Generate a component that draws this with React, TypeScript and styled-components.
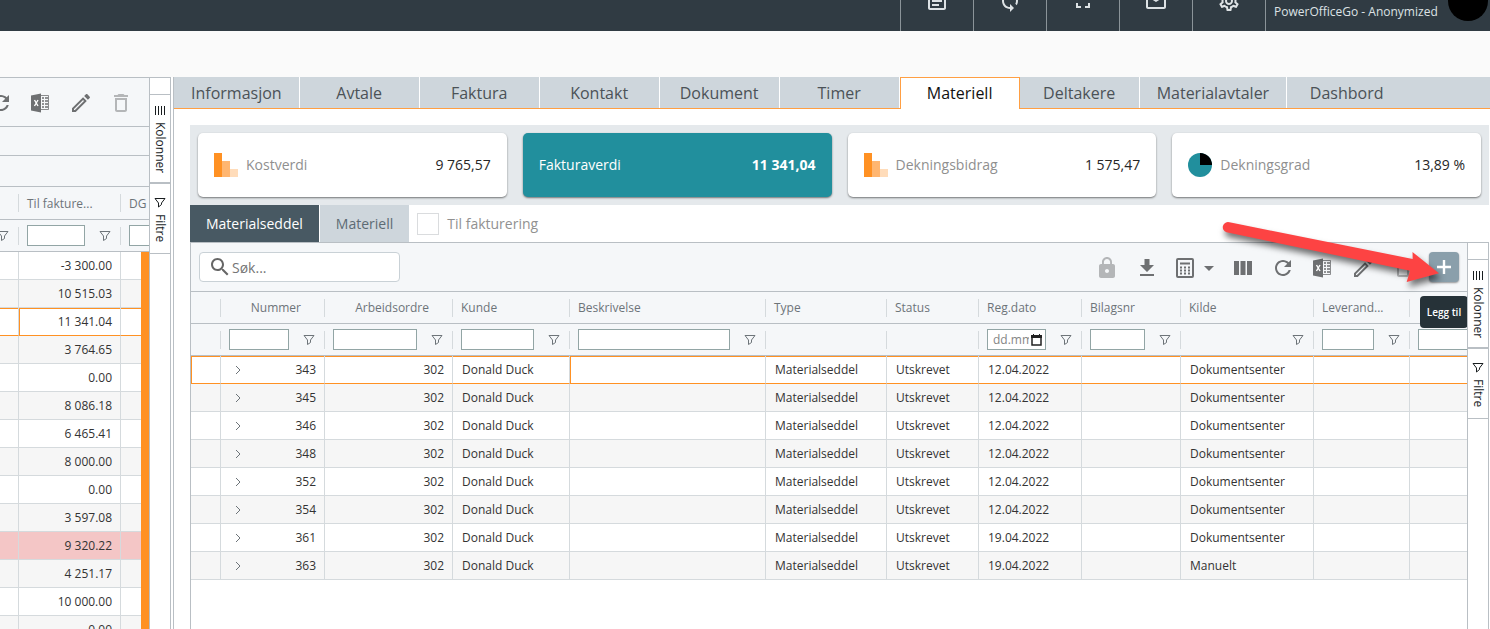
import React from "react";
import styled, { createGlobalStyle } from "styled-components";
import {
  MdFullscreen,
  MdOutlineArticle,
  MdOutlineEmail,
  MdOutlineSettings,
  MdSync,
} from "react-icons/md";

const line = "#b9bfc4";
const rowLine = "#d5dadd";
const orange = "#ff9123";
const tabGrey = "#ced6dc";
const panelGrey = "#f5f7f9";
const iconGrey = "#6e7072";

const GlobalStyle = createGlobalStyle`
  *, *::before, *::after { box-sizing: border-box; }
  body {
    margin: 0;
    background: #fafafa;
    color: #333333;
    font-family: "Open Sans", "Noto Sans", sans-serif;
    font-size: 12px;
    overflow: hidden;
  }
  button, input { font: inherit; color: inherit; }
  button { border: 0; padding: 0; background: none; cursor: pointer; }
`;

const Page = styled.div`
  display: flex;
  flex-direction: column;
  height: 100vh;
  overflow: hidden;
`;

/* ---------- top bar ---------- */

const TopBar = styled.header`
  display: flex;
  justify-content: flex-end;
  flex: none;
  height: 60px;
  margin-top: -29px;
  margin-bottom: 46px;
  background: #303b43;
  color: #dde2e5;
`;

const TopButton = styled.button`
  display: flex;
  align-items: center;
  justify-content: center;
  width: 73px;
  border-left: 1px solid #8b9499;
`;

const UserBox = styled.div`
  display: flex;
  align-items: center;
  justify-content: space-between;
  width: 225px;
  padding: 0 2px 0 8px;
  border-left: 1px solid #8b9499;
`;

const UserName = styled.span`
  padding-top: 22px;
  line-height: 18px;
  white-space: nowrap;
`;

const Avatar = styled.span`
  width: 40px;
  height: 40px;
  border-radius: 50%;
  background: #000000;
`;

/* ---------- frame ---------- */

const Columns = styled.div`
  display: flex;
  flex: 1;
  min-height: 0;
  background: #ffffff;
`;

const GridFrame = styled.section<{ $narrow?: boolean }>`
  display: flex;
  flex: ${(p) => (p.$narrow ? "none" : "1")};
  min-height: 0;
  border: 1px solid ${line};
  border-bottom: 0;
  border-left-width: ${(p) => (p.$narrow ? "0" : "1px")};
  background: #ffffff;
`;

const GridMain = styled.div<{ $narrow?: boolean }>`
  flex: ${(p) => (p.$narrow ? "none" : "1")};
  width: ${(p) => (p.$narrow ? "149px" : "auto")};
  min-width: 0;
  overflow: hidden;
`;

const RightPane = styled.main`
  display: flex;
  flex-direction: column;
  flex: 1;
  min-width: 0;
  margin-left: 2px;
  border-left: 1px solid ${line};
`;

const PaneBody = styled.div`
  display: flex;
  flex-direction: column;
  flex: 1;
  min-height: 0;
  padding: 16px 1px 0 16px;
`;

/* ---------- main tabs ---------- */

const TabBar = styled.nav`
  display: flex;
  flex: none;
  height: 32px;
  background: ${tabGrey};
  border-bottom: 1px solid #ff9f43;
`;

const Tab = styled.button<{ $active?: boolean; $last?: boolean }>`
  min-width: 120px;
  height: ${(p) => (p.$active ? "32px" : "31px")};
  padding: 0 17px ${(p) => (p.$active ? "2px" : "0")};
  font-size: 16px;
  line-height: 24px;
  color: ${(p) => (p.$active ? "#111111" : "#4b5257")};
  background: ${(p) => (p.$active ? "#ffffff" : tabGrey)};
  border: 0 solid #ff9f43;
  border-width: ${(p) => (p.$active ? "1px 1px 0" : "0 1px 0 0")};
  border-right-color: ${(p) => (p.$active ? "#ff9f43" : p.$last ? tabGrey : "#ffffff")};
`;

/* ---------- key figure cards ---------- */

const Cards = styled.div`
  display: grid;
  grid-template-columns: repeat(4, 1fr);
  gap: 16px;
  flex: none;
  padding: 8px;
  background: #e5e9ec;
`;

const Card = styled.button<{ $active?: boolean }>`
  display: flex;
  align-items: center;
  gap: 8px;
  height: 64px;
  padding: 0 16px;
  border-radius: 5px;
  font-size: 14px;
  line-height: 20px;
  background: ${(p) => (p.$active ? "#218f9d" : "#ffffff")};
  color: ${(p) => (p.$active ? "#ffffff" : "#8f8f8f")};
  font-weight: ${(p) => (p.$active ? 500 : 400)};
  box-shadow: 0 1px 2px rgba(0, 0, 0, 0.5);
`;

const CardValue = styled.span<{ $active?: boolean }>`
  margin-left: auto;
  font-weight: ${(p) => (p.$active ? 700 : 500)};
  color: ${(p) => (p.$active ? "#ffffff" : "#262626")};
`;

/* ---------- sub tabs ---------- */

const SubBar = styled.div`
  display: flex;
  align-items: center;
  flex: none;
  height: 37px;
`;

const SubTab = styled.button<{ $active?: boolean }>`
  height: 37px;
  padding: 0 16px;
  font-size: 14px;
  font-weight: ${(p) => (p.$active ? 500 : 400)};
  color: ${(p) => (p.$active ? "#ffffff" : "#5d6b74")};
  background: ${(p) => (p.$active ? "#485963" : tabGrey)};
  border-right: ${(p) => (p.$active ? "1px solid #ffffff" : "0")};
`;

const CheckLabel = styled.label`
  display: flex;
  align-items: center;
  gap: 8px;
  margin-left: 8px;
  font-size: 14px;
  color: #919191;
`;

const CheckBox = styled.input`
  appearance: none;
  width: 22px;
  height: 22px;
  margin: 0;
  border: 1px solid #dadcde;
  background: #ffffff;
`;

/* ---------- toolbar ---------- */

const Toolbar = styled.div`
  display: flex;
  align-items: center;
  justify-content: flex-end;
  gap: 16px;
  height: 49px;
  padding: 0 8px;
  background: ${panelGrey};
  border-bottom: 1px solid ${line};
`;

const NarrowToolbar = styled(Toolbar)`
  padding: 0 16px;
`;

const SearchBox = styled.label`
  display: flex;
  align-items: center;
  width: 201px;
  height: 30px;
  margin-right: auto;
  padding: 0 8px;
  border: 1px solid #c9d1d6;
  border-radius: 4px;
  background: #ffffff;
  color: #666666;
`;

const SearchInput = styled.input`
  flex: 1;
  min-width: 0;
  padding: 0;
  border: 0;
  outline: 0;
  background: none;
  font-size: 14px;
  &::placeholder { color: #757575; opacity: 1; }
`;

const ToolButton = styled.button<{ $dim?: boolean; $wide?: boolean }>`
  display: flex;
  align-items: flex-end;
  flex: none;
  width: ${(p) => (p.$wide ? "40px" : "24px")};
  height: 26px;
  color: ${(p) => (p.$dim ? "#b4b6b8" : iconGrey)};
`;

const AddWrap = styled.div`
  position: relative;
  margin-left: -2px;
`;

const AddButton = styled.button`
  display: flex;
  align-items: center;
  justify-content: center;
  width: 30px;
  height: 30px;
  border-radius: 4px;
  background: #8a9fab;
  color: #ffffff;
  box-shadow: 0 1px 2px rgba(0, 0, 0, 0.4);
`;

const Tooltip = styled.span`
  position: absolute;
  z-index: 2;
  top: 44px;
  left: -9px;
  width: 48px;
  border-radius: 4px;
  background: #263238;
  color: #ffffff;
  font-size: 10px;
  font-weight: 600;
  line-height: 32px;
  text-align: center;
  white-space: nowrap;
`;

const Band = styled.div<{ $height: number }>`
  height: ${(p) => p.$height}px;
  background: ${panelGrey};
  border-bottom: 1px solid ${line};
`;

/* ---------- table ---------- */

const Table = styled.table`
  width: 100%;
  table-layout: fixed;
  border-collapse: separate;
  border-spacing: 0;
`;

const HeadCell = styled.th<{ $right?: boolean; $last?: boolean; $tall?: boolean }>`
  height: ${(p) => (p.$tall ? "33px" : "32px")};
  padding: 0 ${(p) => (p.$right ? "24px" : p.$last ? "0" : "8px")} 0 8px;
  overflow: hidden;
  text-align: ${(p) => (p.$right ? "right" : "left")};
  font-weight: 400;
  color: #6d7479;
  white-space: nowrap;
  border-bottom: 1px solid ${line};
  background: ${(p) =>
      p.$last ? "none" : `linear-gradient(${rowLine}, ${rowLine}) right center / 1px 18px no-repeat`},
    ${panelGrey};
`;

const FilterTh = styled(HeadCell)`
  padding: 0;
`;

const FilterRow = styled.div<{ $clip?: boolean }>`
  display: flex;
  align-items: center;
  justify-content: ${(p) => (p.$clip ? "flex-start" : "flex-end")};
  gap: 12px;
  padding: 0 8px;
`;

const FilterInput = styled.input<{ $clip?: boolean }>`
  flex: 1 0 ${(p) => (p.$clip ? "80px" : "0")};
  min-width: 0;
  height: 21px;
  padding: 0 4px;
  border: 1px solid #92a5a5;
  border-radius: 0;
  background: #ffffff;
`;

const DateBox = styled.label`
  display: flex;
  align-items: center;
  gap: 2px;
  flex: 1;
  min-width: 0;
  height: 21px;
  padding: 0 3px 0 5px;
  border: 1px solid #92a5a5;
  background: #ffffff;
  color: #222222;
`;

const DateInput = styled.input`
  flex: 1;
  min-width: 0;
  padding: 0;
  border: 0;
  background: none;
  &::placeholder { color: #858585; opacity: 1; }
`;

const SmallButton = styled.button`
  display: flex;
  align-items: center;
  justify-content: center;
  flex: none;
  width: 16px;
  height: 16px;
  color: #6d7479;
`;

type RowTone = "plain" | "selected" | "alert";

const Row = styled.tr<{ $tone?: RowTone }>`
  &:nth-child(even) { background: #f6f6f6; }
  &:nth-child(odd) { background: ${(p) => (p.$tone === "alert" ? "#f4c6c6" : "#ffffff")}; }
  & > td {
    border-bottom-color: ${(p) => (p.$tone === "selected" ? orange : rowLine)};
    box-shadow: ${(p) => (p.$tone === "selected" ? `inset 0 1px ${orange}` : "none")};
  }
`;

const Cell = styled.td<{ $right?: boolean; $focus?: boolean; $last?: boolean; $bar?: boolean }>`
  height: 28px;
  padding: 0 8px 0 9px;
  overflow: hidden;
  white-space: nowrap;
  text-align: ${(p) => (p.$right ? "right" : "left")};
  border-bottom: 1px solid ${rowLine};
  border-right: ${(p) =>
    p.$bar ? `8px solid ${orange}` : p.$last ? "0" : `1px solid ${rowLine}`};
  border-left: ${(p) => (p.$focus ? `1px solid ${orange}` : "0")};
`;

const FirstCell = styled(Cell)<{ $selected?: boolean }>`
  border-left: ${(p) => (p.$selected ? `1px solid ${orange}` : "0")};
`;

const BarCell = styled(Cell)`
  border-bottom: 0;
  padding: 0;
`;

const BarFill = styled.div<{ $selected?: boolean }>`
  height: 28px;
  border-bottom: 1px solid ${(p) => (p.$selected ? orange : rowLine)};
`;

const NumberCell = styled.div`
  display: flex;
  align-items: center;
  justify-content: space-between;
`;

/* ---------- side tabs ---------- */

const SideBar = styled.aside`
  flex: none;
  width: 21px;
  padding-top: 16px;
  border-left: 1px solid ${line};
  background: #ffffff;
`;

const SideButton = styled.button`
  display: flex;
  align-items: center;
  justify-content: center;
  gap: 4px;
  width: 20px;
  min-height: 71px;
  padding: 7px 0 9px;
  writing-mode: vertical-rl;
  line-height: 20px;
  color: #181d1f;
  border-bottom: 1px solid ${line};
  border-top: 1px solid ${line};
`;

/* ---------- icons ---------- */

const Glyph = ({ d, size = 24 }: { d: string; size?: number }) => (
  <svg width={size} height={size} viewBox="0 0 24 24" fill="currentColor" aria-hidden="true">
    <path d={d} />
  </svg>
);

const paths = {
  refresh:
    "M17.65 6.35C16.2 4.9 14.21 4 12 4c-4.42 0-7.99 3.58-7.99 8s3.57 8 7.99 8c3.73 0 6.84-2.55 7.73-6h-2.08c-.82 2.33-3.04 4-5.65 4-3.31 0-6-2.69-6-6s2.69-6 6-6c1.66 0 3.14.69 4.22 1.78L13 11h7V4l-2.35 2.35z",
  lock: "M18 8h-1V6c0-2.76-2.24-5-5-5S7 3.24 7 6v2H6c-1.1 0-2 .9-2 2v10c0 1.1.9 2 2 2h12c1.1 0 2-.9 2-2V10c0-1.1-.9-2-2-2zm-6 9c-1.1 0-2-.9-2-2s.9-2 2-2 2 .9 2 2-.9 2-2 2zm3.1-9H8.9V6c0-1.71 1.39-3.1 3.1-3.1 1.71 0 3.1 1.39 3.1 3.1v2z",
  download: "M9.500 3h5v6H19l-7 7-7-7h4.500zM5 18h14v2H5z",
  edit: "M14.06 9.02l.92.92L5.92 19H5v-.92l9.06-9.06M17.66 3c-.25 0-.51.1-.7.29l-1.83 1.83 3.75 3.75 1.83-1.83c.39-.39.39-1.02 0-1.41l-2.34-2.34c-.2-.2-.45-.29-.71-.29zm-3.6 3.19L3 17.25V21h3.75L17.81 9.94l-3.75-3.75z",
  trash:
    "M6 19c0 1.1.9 2 2 2h8c1.1 0 2-.9 2-2V7H6v12zM8 9h8v10H8V9zm7.5-5l-1-1h-5l-1 1H5v2h14V4z",
  search:
    "M15.5 14h-.79l-.28-.27C15.41 12.59 16 11.11 16 9.5 16 5.91 13.09 3 9.5 3S3 5.91 3 9.5 5.91 16 9.5 16c1.61 0 3.09-.59 4.23-1.57l.27.28v.79l5 4.99L20.49 19l-4.99-5zm-6 0C7.01 14 5 11.99 5 9.5S7.01 5 9.5 5 14 7.01 14 9.5 11.99 14 9.5 14z",
  columns: "M3 5h5v14H3zM9.500 5h5v14h-5zM16 5h5v14h-5z",
  plus: "M10.800 5h2.400v5.800H19v2.400h-5.800V19h-2.400v-5.800H5v-2.400h5.800z",
};

const ExcelIcon = () => (
  <svg width="24" height="24" viewBox="0 0 24 24" aria-hidden="true">
    <path d="M2 4.500L12 2.500v19L2 19.500z" fill="currentColor" />
    <path d="M12 4.500h7.500v14H12" fill="none" stroke="currentColor" strokeWidth="0.800" />
    <path
      d="M13 7h2M16 7h3M13 10h2M16 10h3M13 13h2M16 13h3M13 16h2M16 16h3"
      stroke="currentColor"
      strokeWidth="1.500"
    />
    <path d="M5.500 9l3.500 6M9 9l-3.500 6" stroke="#ffffff" strokeWidth="1.400" />
  </svg>
);

const CalcIcon = () => (
  <svg width="40" height="24" viewBox="0 0 40 24" fill="none" aria-hidden="true">
    <rect x="2" y="3" width="16" height="18" rx="1" stroke="currentColor" strokeWidth="2" />
    <path d="M5 7.500h10" stroke="currentColor" strokeWidth="2" />
    <path
      d="M5 11.500h10M5 14.500h10M5 17.500h10"
      stroke="currentColor"
      strokeWidth="2"
      strokeDasharray="2 2"
    />
    <path d="M29 10h10l-5 5z" fill="currentColor" />
  </svg>
);

const FunnelIcon = () => (
  <svg width="12" height="12" viewBox="0 0 12 12" fill="none" stroke="currentColor" aria-hidden="true">
    <path d="M1 1.500h10L7.500 6v2.500l-3 2V6z" />
  </svg>
);

const ColumnLines = () => (
  <svg width="16" height="16" viewBox="0 0 16 16" stroke="currentColor" aria-hidden="true">
    <path d="M3.500 4v9M6.500 4v9M9.500 4v9M12.500 4v9" />
  </svg>
);

const SideFunnel = () => (
  <svg width="16" height="16" viewBox="0 0 16 16" fill="none" stroke="currentColor" aria-hidden="true">
    <path d="M3 4.500h10L9.500 9v1.500l-3 2.500V9z" />
  </svg>
);

const ChevronIcon = () => (
  <svg width="12" height="12" viewBox="0 0 12 12" fill="none" stroke="currentColor" aria-hidden="true">
    <path d="M4 2l4 4-4 4" />
  </svg>
);

const CalendarIcon = () => (
  <svg width="11" height="12" viewBox="0 0 11 12" aria-hidden="true">
    <path d="M1 2h9v9H1z" fill="none" stroke="currentColor" strokeWidth="1.500" />
    <path d="M0 1h11v3H0zM2 0h1v2H2zM8 0h1v2H8z" fill="currentColor" />
  </svg>
);

const BarsIcon = () => (
  <svg width="24" height="24" viewBox="0 0 24 24" aria-hidden="true">
    <path d="M0 0h8v24H0z" fill="#ff9123" />
    <path d="M8 8h8v16H8z" fill="#ffb671" />
    <path d="M16 16h8v8h-8z" fill="#ffdcba" />
  </svg>
);

const PieIcon = () => (
  <svg width="24" height="24" viewBox="0 0 24 24" aria-hidden="true">
    <circle cx="12" cy="12" r="12" fill="#218f9d" />
    <path d="M12 12V0a12 12 0 0 1 12 12z" fill="#000000" />
  </svg>
);

/* ---------- parts ---------- */

const SideTabs = () => (
  <SideBar>
    <SideButton>
      <ColumnLines />
      Kolonner
    </SideButton>
    <SideButton>
      <SideFunnel />
      Filtre
    </SideButton>
  </SideBar>
);

type FilterKind = "text" | "date" | "icon" | "clip" | "none";

const Filter = ({ kind, label }: { kind: FilterKind; label: string }) => {
  if (kind === "none") return null;
  return (
    <FilterRow $clip={kind === "clip"}>
      {(kind === "text" || kind === "clip") && (
        <FilterInput $clip={kind === "clip"} aria-label={`Filter ${label}`} />
      )}
      {kind === "date" && (
        <DateBox>
          <DateInput placeholder="dd.mm.åååå" aria-label={`Filter ${label}`} />
          <CalendarIcon />
        </DateBox>
      )}
      {kind !== "clip" && (
        <SmallButton aria-label={`Filter ${label}`}>
          <FunnelIcon />
        </SmallButton>
      )}
    </FilterRow>
  );
};

const amounts = [
  "-3 300.00",
  "10 515.03",
  "11 341.04",
  "3 764.65",
  "0.00",
  "8 086.18",
  "6 465.41",
  "8 000.00",
  "0.00",
  "3 597.08",
  "9 320.22",
  "4 251.17",
  "10 000.00",
  "0.00",
];

const OrderList = () => (
  <GridFrame $narrow>
    <GridMain $narrow>
      <NarrowToolbar>
        <ToolButton aria-label="Oppdater"><Glyph d={paths.refresh} /></ToolButton>
        <ToolButton aria-label="Excel"><ExcelIcon /></ToolButton>
        <ToolButton aria-label="Rediger"><Glyph d={paths.edit} /></ToolButton>
        <ToolButton $dim aria-label="Slett"><Glyph d={paths.trash} /></ToolButton>
      </NarrowToolbar>
      <Band $height={29} />
      <Band $height={31} />
      <Table>
        <colgroup>
          <col width="19" />
          <col width="102" />
          <col />
        </colgroup>
        <thead>
          <tr>
            <HeadCell $tall />
            <HeadCell $tall>Til fakture...</HeadCell>
            <HeadCell $tall $last>DG</HeadCell>
          </tr>
          <tr>
            <FilterTh><Filter kind="icon" label="ordre" /></FilterTh>
            <FilterTh><Filter kind="text" label="til fakturering" /></FilterTh>
            <FilterTh $last><Filter kind="clip" label="DG" /></FilterTh>
          </tr>
        </thead>
        <tbody>
          {amounts.map((amount, i) => (
            <Row key={i} $tone={i === 2 ? "selected" : i === 10 ? "alert" : "plain"}>
              <Cell />
              <Cell $right $focus={i === 2}>{amount}</Cell>
              <BarCell $bar><BarFill $selected={i === 2} /></BarCell>
            </Row>
          ))}
        </tbody>
      </Table>
    </GridMain>
    <SideTabs />
  </GridFrame>
);

const columns: { title: string; width?: number; right?: boolean; filter: FilterKind }[] = [
  { title: "", width: 30, filter: "none" },
  { title: "Nummer", width: 104, right: true, filter: "text" },
  { title: "Arbeidsordre", width: 128, right: true, filter: "text" },
  { title: "Kunde", width: 117, filter: "text" },
  { title: "Beskrivelse", width: 196, filter: "text" },
  { title: "Type", width: 121, filter: "none" },
  { title: "Status", width: 92, filter: "none" },
  { title: "Reg.dato", width: 103, filter: "date" },
  { title: "Bilagsnr", width: 99, filter: "text" },
  { title: "Kilde", width: 133, filter: "icon" },
  { title: "Leverand...", width: 96, filter: "text" },
  { title: "", filter: "clip" },
];

const notes = [
  { nr: 343, date: "12.04.2022", source: "Dokumentsenter" },
  { nr: 345, date: "12.04.2022", source: "Dokumentsenter" },
  { nr: 346, date: "12.04.2022", source: "Dokumentsenter" },
  { nr: 348, date: "12.04.2022", source: "Dokumentsenter" },
  { nr: 352, date: "12.04.2022", source: "Dokumentsenter" },
  { nr: 354, date: "12.04.2022", source: "Dokumentsenter" },
  { nr: 361, date: "19.04.2022", source: "Dokumentsenter" },
  { nr: 363, date: "19.04.2022", source: "Manuelt" },
];

const MaterialGrid = () => (
  <GridFrame>
    <GridMain>
      <Toolbar>
        <SearchBox>
          <Glyph d={paths.search} />
          <SearchInput placeholder="Søk..." aria-label="Søk" />
        </SearchBox>
        <ToolButton $dim aria-label="Lås"><Glyph d={paths.lock} /></ToolButton>
        <ToolButton aria-label="Last ned"><Glyph d={paths.download} /></ToolButton>
        <ToolButton $wide aria-label="Kalkulator"><CalcIcon /></ToolButton>
        <ToolButton aria-label="Kolonner"><Glyph d={paths.columns} /></ToolButton>
        <ToolButton aria-label="Oppdater"><Glyph d={paths.refresh} /></ToolButton>
        <ToolButton aria-label="Excel"><ExcelIcon /></ToolButton>
        <ToolButton aria-label="Rediger"><Glyph d={paths.edit} /></ToolButton>
        <ToolButton $dim aria-label="Slett"><Glyph d={paths.trash} /></ToolButton>
        <AddWrap>
          <AddButton aria-label="Legg til"><Glyph d={paths.plus} /></AddButton>
          <Tooltip role="tooltip">Legg til</Tooltip>
        </AddWrap>
      </Toolbar>
      <Table>
        <colgroup>
          {columns.map((c, i) => <col key={i} width={c.width} />)}
        </colgroup>
        <thead>
          <tr>
            {columns.map((c, i) => (
              <HeadCell key={i} $right={c.right} $last={i === columns.length - 1}>{c.title}</HeadCell>
            ))}
          </tr>
          <tr>
            {columns.map((c, i) => (
              <FilterTh key={i} $last={i === columns.length - 1}>
                <Filter kind={c.filter} label={c.title} />
              </FilterTh>
            ))}
          </tr>
        </thead>
        <tbody>
          {notes.map((n, i) => (
            <Row key={n.nr} $tone={i === 0 ? "selected" : "plain"}>
              <FirstCell $selected={i === 0} />
              <Cell>
                <NumberCell>
                  <SmallButton aria-label={`Vis ${n.nr}`}><ChevronIcon /></SmallButton>
                  {n.nr}
                </NumberCell>
              </Cell>
              <Cell $right>302</Cell>
              <Cell>Donald Duck</Cell>
              <Cell $focus={i === 0} />
              <Cell>Materialseddel</Cell>
              <Cell>Utskrevet</Cell>
              <Cell>{n.date}</Cell>
              <Cell />
              <Cell>{n.source}</Cell>
              <Cell />
              <Cell $last />
            </Row>
          ))}
        </tbody>
      </Table>
    </GridMain>
    <SideTabs />
  </GridFrame>
);

const GridArea = styled.div`
  position: relative;
  display: flex;
  flex: 1;
  min-height: 0;
`;

const PointerArrow = styled.svg`
  position: absolute;
  z-index: 3;
  top: -32px;
  right: 38px;
  pointer-events: none;
  filter: drop-shadow(2px 5px 3px rgba(0, 0, 0, 0.55));
`;

const tabs = [
  "Informasjon", "Avtale", "Faktura", "Kontakt", "Dokument",
  "Timer", "Materiell", "Deltakere", "Materialavtaler", "Dashbord",
];

export default function App() {
  return (
    <Page>
      <GlobalStyle />
      <TopBar>
        <TopButton aria-label="Dokumenter"><MdOutlineArticle size={24} /></TopButton>
        <TopButton aria-label="Synkroniser"><MdSync size={24} /></TopButton>
        <TopButton aria-label="Fullskjerm"><MdFullscreen size={24} /></TopButton>
        <TopButton aria-label="Meldinger"><MdOutlineEmail size={24} /></TopButton>
        <TopButton aria-label="Innstillinger"><MdOutlineSettings size={24} /></TopButton>
        <UserBox>
          <UserName>PowerOfficeGo - Anonymized</UserName>
          <Avatar />
        </UserBox>
      </TopBar>
      <Columns>
        <OrderList />
        <RightPane>
          <TabBar>
            {tabs.map((t, i) => (
              <Tab key={t} $active={t === "Materiell"} $last={i === tabs.length - 1}>{t}</Tab>
            ))}
          </TabBar>
          <PaneBody>
            <Cards>
              <Card><BarsIcon />Kostverdi<CardValue>9 765,57</CardValue></Card>
              <Card $active>Fakturaverdi<CardValue $active>11 341,04</CardValue></Card>
              <Card><BarsIcon />Dekningsbidrag<CardValue>1 575,47</CardValue></Card>
              <Card><PieIcon />Dekningsgrad<CardValue>13,89 %</CardValue></Card>
            </Cards>
            <SubBar>
              <SubTab $active>Materialseddel</SubTab>
              <SubTab>Materiell</SubTab>
              <CheckLabel><CheckBox type="checkbox" />Til fakturering</CheckLabel>
            </SubBar>
            <GridArea>
              <MaterialGrid />
              <PointerArrow width="230" height="80" viewBox="0 0 230 80" aria-hidden="true">
                <path
                  d="M8.500 12.300L191.700 49l-.2-7L218 63.300 185.700 72l3.300-11.300L5.500 22.300a5 5 0 0 1 3-10z"
                  fill="#fd4343"
                />
              </PointerArrow>
            </GridArea>
          </PaneBody>
        </RightPane>
      </Columns>
    </Page>
  );
}
